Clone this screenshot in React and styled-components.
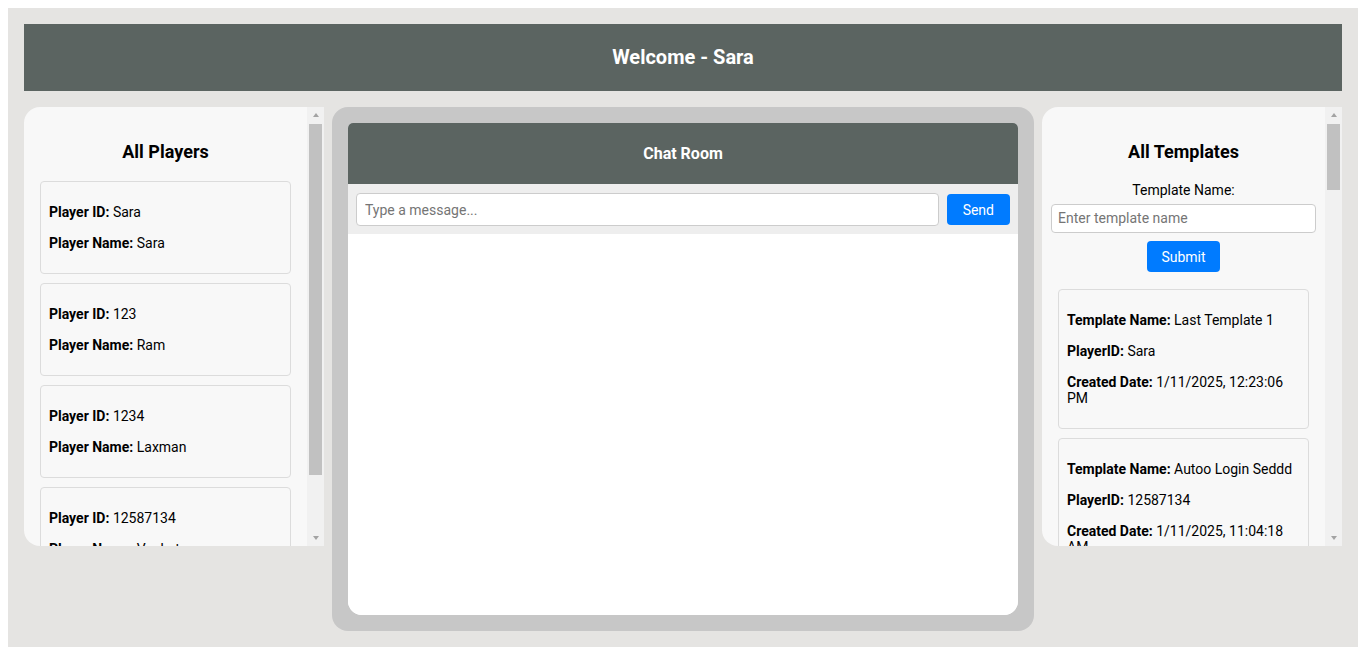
import React from "react";
import styled, { createGlobalStyle } from "styled-components";

const GlobalStyle = createGlobalStyle`
  body {
    margin: 8px;
    font-family: Roboto, "Liberation Sans", Arial, sans-serif;
    color: #000;
  }
`;

const players = [
  { id: "Sara", name: "Sara" },
  { id: "123", name: "Ram" },
  { id: "1234", name: "Laxman" },
  { id: "12587134", name: "Venkat" },
];

const templates = [
  { name: "Last Template 1", player: "Sara", created: "1/11/2025, 12:23:06 PM" },
  { name: "Autoo Login Seddd", player: "12587134", created: "1/11/2025, 11:04:18 AM" },
  { name: "Morning Routine", player: "123", created: "1/10/2025, 6:12:40 PM" },
];

function ScrollBar({ thumb }) {
  return (
    <Track>
      <Arrow $dir="up" />
      <Thumb style={{ height: thumb }} />
      <TrackRest />
      <Arrow $dir="down" />
    </Track>
  );
}

function App() {
  return (
    <>
      <GlobalStyle />
      <Page>
        <Header>Welcome - Sara</Header>
        <Main>
          <Panel>
            <PanelBody>
              <PanelTitle>All Players</PanelTitle>
              {players.map((p) => (
                <Card key={p.id}>
                  <Line>
                    <b>Player ID:</b> {p.id}
                  </Line>
                  <Line>
                    <b>Player Name:</b> {p.name}
                  </Line>
                </Card>
              ))}
            </PanelBody>
            <ScrollBar thumb={351} />
          </Panel>

          <ChatFrame>
            <ChatBox>
              <ChatHeader>Chat Room</ChatHeader>
              <ChatInputRow>
                <MessageInput placeholder="Type a message..." />
                <Button $padX={16}>Send</Button>
              </ChatInputRow>
              <Messages />
            </ChatBox>
          </ChatFrame>

          <Panel>
            <PanelBody>
              <PanelTitle>All Templates</PanelTitle>
              <Form>
                <Label>Template Name:</Label>
                <TemplateInput placeholder="Enter template name" />
                <Button $padX={14.5}>Submit</Button>
              </Form>
              {templates.map((t) => (
                <Card key={t.name}>
                  <Line>
                    <b>Template Name:</b> {t.name}
                  </Line>
                  <Line>
                    <b>PlayerID:</b> {t.player}
                  </Line>
                  <Line>
                    <b>Created Date:</b> {t.created}
                  </Line>
                </Card>
              ))}
            </PanelBody>
            <ScrollBar thumb={66} />
          </Panel>
        </Main>
      </Page>
    </>
  );
}

export default App;

const Page = styled.div`
  background: #e5e4e2;
  padding: 16px;
  box-sizing: border-box;
`;

const Header = styled.header`
  background: #5b6461;
  color: #fff;
  font-size: 20px;
  font-weight: 700;
  line-height: 23px;
  padding: 22px 0;
  text-align: center;
  margin-bottom: 16px;
`;

const Main = styled.div`
  display: grid;
  grid-template-columns: 300px 1fr 300px;
  gap: 8px;
  align-items: start;
`;

const Panel = styled.section`
  display: flex;
  background: #f8f8f8;
  border-radius: 16px 0 0 16px;
  height: 439px;
  overflow: hidden;
`;

const PanelBody = styled.div`
  flex: 1;
  min-width: 0;
  overflow: hidden;
  padding: 0 16px;
`;

const Track = styled.div`
  width: 17px;
  flex-shrink: 0;
  display: flex;
  flex-direction: column;
  background: #f1f1f1;
`;

const Arrow = styled.div`
  height: 17px;
  flex-shrink: 0;
  display: flex;
  align-items: center;
  justify-content: center;

  &::before {
    content: "";
    width: 0;
    height: 0;
    border-left: 3.5px solid transparent;
    border-right: 3.5px solid transparent;
    ${(p) =>
      p.$dir === "up"
        ? "border-bottom: 4px solid #a3a3a3; margin-top: -1px;"
        : "border-top: 4px solid #a3a3a3; margin-top: 1px;"}
  }
`;

const Thumb = styled.div`
  flex-shrink: 0;
  margin: 0 2px;
  background: #c1c1c1;
`;

const TrackRest = styled.div`
  flex: 1;
`;

const PanelTitle = styled.h2`
  font-size: 18px;
  font-weight: 700;
  line-height: 21px;
  text-align: center;
  margin: 33.5px 0 19.5px;
`;

const Card = styled.div`
  border: 1px solid #dcdcdc;
  border-radius: 4px;
  padding: 0 8px;
  margin-bottom: 9px;
`;

const Line = styled.p`
  font-size: 14px;
  line-height: 16px;
  margin: 22px 0 15px;

  & + & {
    margin-top: 0;
  }

  &:last-child {
    margin-bottom: 22px;
  }

  b {
    font-weight: 700;
  }
`;

const ChatFrame = styled.div`
  background: #c7c7c7;
  border-radius: 16px;
  padding: 16px;
  height: 524px;
  box-sizing: border-box;
`;

const ChatBox = styled.div`
  display: flex;
  flex-direction: column;
  height: 100%;
  background: #fff;
  border-radius: 5px 5px 14px 14px;
  overflow: hidden;
`;

const ChatHeader = styled.div`
  background: #5b6461;
  color: #fff;
  font-size: 16px;
  font-weight: 700;
  height: 61px;
  display: flex;
  align-items: center;
  justify-content: center;
`;

const ChatInputRow = styled.div`
  display: flex;
  align-items: center;
  gap: 8px;
  padding: 9px 8px 8px;
  background: #eeeeee;
`;

const MessageInput = styled.input`
  flex: 1;
  font-family: inherit;
  font-size: 14px;
  line-height: 16px;
  padding: 7.5px 8px;
  border: 1px solid #ccc;
  border-radius: 4px;
  outline: none;

  &::placeholder {
    color: #757575;
  }
`;

const Button = styled.button`
  background: #007bff;
  color: #fff;
  border: none;
  border-radius: 4px;
  font-family: inherit;
  font-size: 14px;
  line-height: 16px;
  padding: 7.5px ${(p) => p.$padX}px;
  cursor: pointer;
`;

const Messages = styled.div`
  flex: 1;
  background: #fff;
`;

const Form = styled.div`
  display: flex;
  flex-direction: column;
  align-items: center;
  gap: 8px;
  margin-bottom: 17px;
`;

const Label = styled.label`
  font-size: 14px;
  line-height: 16px;
  margin: 1px 0 -2px;
`;

const TemplateInput = styled.input`
  width: 100%;
  box-sizing: content-box;
  margin: 0 -7px;
  font-family: inherit;
  font-size: 14px;
  line-height: 15px;
  padding: 6px;
  border: 1px solid #ccc;
  border-radius: 4px;
  outline: none;

  &::placeholder {
    color: #757575;
  }
`;
